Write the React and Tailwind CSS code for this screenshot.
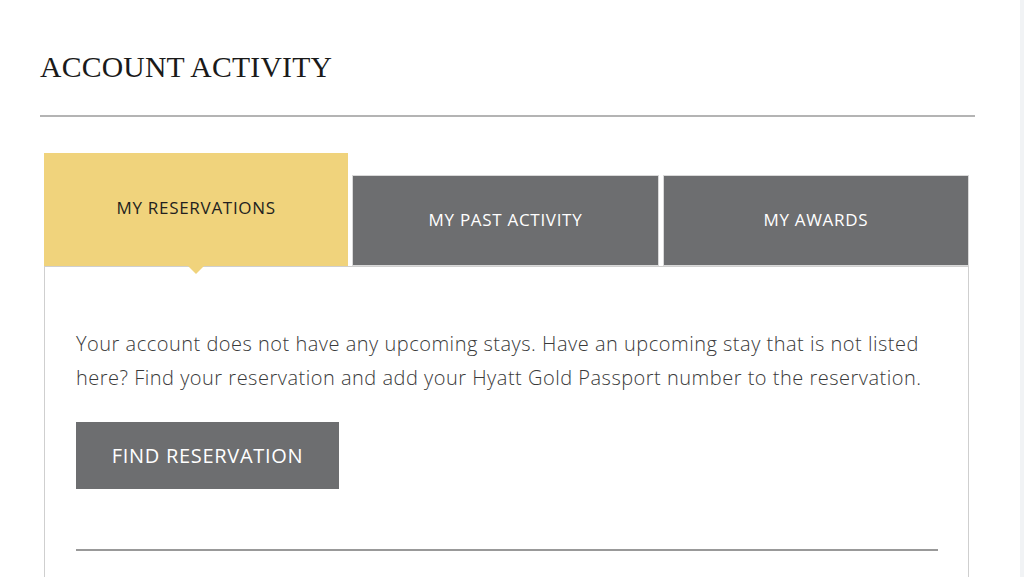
import React, { useState } from 'react';

const tabs = ["MY RESERVATIONS", "MY PAST ACTIVITY", "MY AWARDS"];

export default function App() {
    const [active, setActive] = useState(0);

    return (
        <div className="w-[1024px] h-[577px] overflow-hidden bg-white flex">
            <div className="flex-1 pl-[40px] pr-[45px]">
                {/* PAGE TITLE */}
                <h1 className="pt-[51px] pb-[32px] text-[29.7px] leading-[32px] text-[#1a1a1a] tracking-[0.2px] font-['Liberation_Serif',serif]">
                    ACCOUNT ACTIVITY
                </h1>
                <div className="h-[2px] bg-[#b4b4b4]"></div>

                {/* TABS */}
                <div className="pl-[4px] pr-[6px] pt-[36px]">
                    <div className="flex items-end gap-[4px] h-[113px]">
                        {tabs.map((t, i) => (
                            <button
                                key={t}
                                onClick={() => setActive(i)}
                                className={`relative flex-1 flex items-center justify-center text-[17px] tracking-[0.7px] font-['Open_Sans',sans-serif] ${
                                    active === i
                                        ? 'h-[113px] bg-[#f0d37c] text-[#231f20] pb-[3px]'
                                        : 'h-[91px] bg-[#6d6e70] text-white border border-[#d9d9d9] pb-[2px]'
                                }`}
                            >
                                {t}
                                {active === i && (
                                    <span className="absolute left-1/2 -translate-x-1/2 -bottom-[8px] w-0 h-0 border-l-[8px] border-r-[8px] border-t-[8px] border-l-transparent border-r-transparent border-t-[#f0d37c]"></span>
                                )}
                            </button>
                        ))}
                    </div>

                    {/* PANEL */}
                    <div className="border border-[#cfcfcf] border-b-0 pl-[31px] pr-[30px] pt-[60px] pb-[40px] h-[320px]">
                        <p className="text-[20px] leading-[34px] tracking-[0.5px] text-[#3a3a3a] font-light font-['Open_Sans',sans-serif]">
                            Your account does not have any upcoming stays. Have an upcoming stay that is not listed here? Find your reservation and add your Hyatt Gold Passport number to the reservation.
                        </p>
                        <button className="mt-[27px] w-[263px] h-[67px] bg-[#6d6e70] text-white text-[20px] tracking-[0.7px] font-['Open_Sans',sans-serif]">
                            FIND RESERVATION
                        </button>
                        <div className="mt-[60px] h-[2px] bg-[#999999]"></div>
                    </div>
                </div>
            </div>
            <div className="w-[4px] bg-[#f1f3f5]"></div>
        </div>
    );
}
